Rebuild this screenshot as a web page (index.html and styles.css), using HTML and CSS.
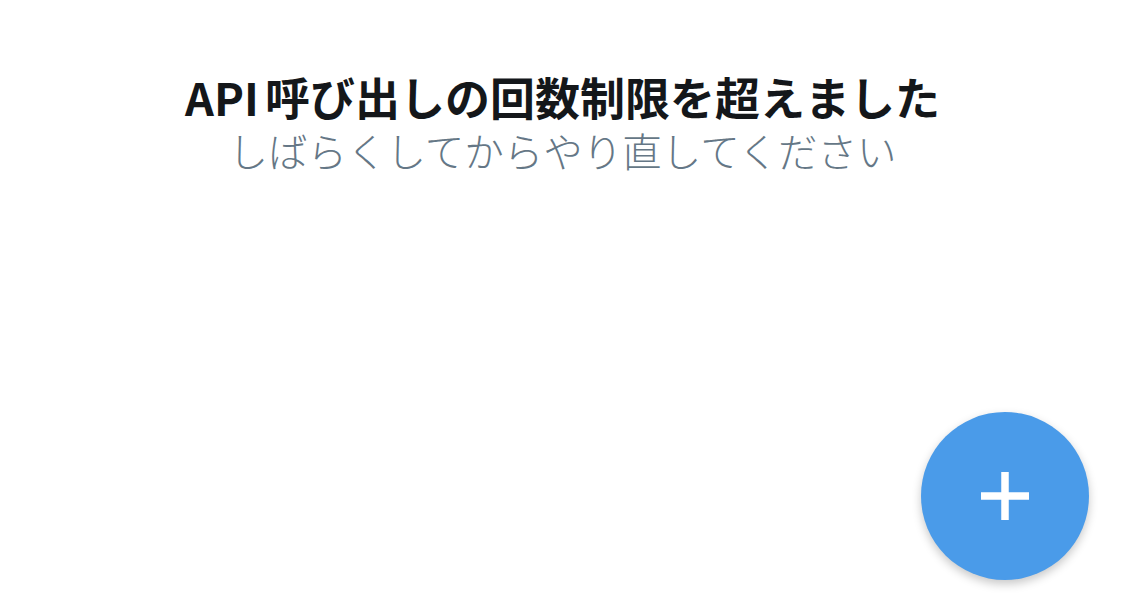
FILE: index.html
```html
<!DOCTYPE html>
<html lang="ja">
<head>
<meta charset="utf-8">
<link rel="stylesheet" href="styles.css">
</head>
<body>
<main class="screen">
  <section class="message">
    <h1 class="title">API 呼び出しの回数制限を超えました</h1>
    <p class="subtitle">しばらくしてからやり直してください</p>
  </section>
  <button class="fab" aria-label="追加">
    <svg class="fab-icon" viewBox="0 0 48 48" width="48" height="48">
      <path d="M24 0V48M0 24H48" stroke="#fff" stroke-width="7.5" fill="none"/>
    </svg>
  </button>
</main>
</body>
</html>
```
FILE: styles.css
```css
html, body {
  margin: 0;
  padding: 0;
  background: #ffffff;
}
.screen {
  position: relative;
  width: 1125px;
  height: 598px;
  overflow: hidden;
  font-family: "Noto Sans CJK JP", "Noto Sans", sans-serif;
}
.message {
  display: flex;
  flex-direction: column;
  align-items: center;
  padding-top: 69px;
}
.title {
  margin: 0;
  font-size: 45px;
  line-height: 56px;
  font-weight: 700;
  color: #14171a;
  word-spacing: -4px;
}
.subtitle {
  margin: 0;
  font-size: 39.5px;
  line-height: 50px;
  font-weight: 300;
  color: #657786;
}
.fab {
  position: absolute;
  right: 36px;
  bottom: 18px;
  width: 168px;
  height: 168px;
  border: none;
  border-radius: 50%;
  padding: 0;
  background: #4a9be9;
  box-shadow: 0 4px 10px rgba(0, 0, 0, 0.22);
  display: flex;
  align-items: center;
  justify-content: center;
}
.fab-icon {
  display: block;
}
```
